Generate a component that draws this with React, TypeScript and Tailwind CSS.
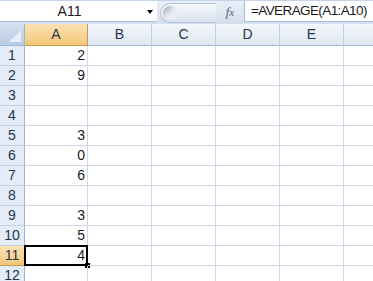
import React from 'react';

const cols = ['A', 'B', 'C', 'D', 'E', 'F'];
const values: Record<number, string> = { 1: '2', 2: '9', 5: '3', 6: '0', 7: '6', 9: '3', 10: '5', 11: '4' };
const rows = Array.from({ length: 12 }, (_, i) => i + 1);

export default function App() {
  return (
    <div
      className="w-[373px] h-[281px] overflow-hidden bg-white text-[#1a1a1a]"
      style={{ fontFamily: '"Liberation Sans", Arial, sans-serif' }}
    >
      {/* formula bar */}
      <div className="flex h-[24px] border-t border-[#c5d3e6] bg-gradient-to-b from-[#e9eff8] to-[#d3deed]">
        <div className="relative flex w-[157px] h-[21px] items-center justify-center bg-white border-b border-[#a9bcd6]">
          <span className="text-[14px] pr-[18px]">A11</span>
          <div className="absolute right-[4px] top-[9px] w-0 h-0 border-l-[3.5px] border-r-[3.5px] border-t-[4px] border-l-transparent border-r-transparent border-t-black" />
        </div>
        <div className="flex flex-1 items-center">
          <div className="ml-[3px] flex h-[20px] w-[56px] items-center rounded-l-full border border-r-0 border-[#b4c3d7] bg-gradient-to-b from-[#f7f9fc] to-[#d9e2ef]">
            <div className="ml-[2px] h-[14px] w-[14px] rounded-full bg-gradient-to-br from-[#9aa4b0] via-[#e4e8ee] to-[#f5f7fa]" />
          </div>
          <div className="flex w-[28px] h-[21px] items-center justify-center self-start">
            <span
              className="text-[13px] italic text-[#5b6170]"
              style={{ fontFamily: '"Liberation Serif", "Times New Roman", serif' }}
            >
              f<span className="text-[11px]">x</span>
            </span>
          </div>
          <div className="self-start flex h-[21px] flex-1 items-center border-l border-b border-[#a9bcd6] bg-white pl-[6px]">
            <span className="text-[13.5px] tracking-[-0.6px] whitespace-nowrap">=AVERAGE(A1:A10)</span>
          </div>
        </div>
      </div>

      {/* grid */}
      <div className="grid grid-cols-[25px_63px_64px_64px_64px_64px_64px] grid-rows-[22px_repeat(12,20px)]">
        <div className="relative border-r border-b border-[#9eb6ce] bg-gradient-to-b from-[#d3dfef] to-[#b9cce5]">
          <svg className="absolute right-[3px] bottom-[3px]" width="12" height="12" viewBox="0 0 12 12">
            <polygon points="12,0 12,12 0,12" fill="#e9eff8" />
          </svg>
        </div>
        {cols.map((c) => (
          <div
            key={c}
            className={
              c === 'A'
                ? 'flex items-center justify-center border-r border-b border-[#c29b53] bg-gradient-to-b from-[#fbe2b4] to-[#f3c677] text-[14px] text-[#27364a]'
                : 'flex items-center justify-center border-r border-b border-r-[#c0cfe2] border-b-[#9eb6ce] bg-gradient-to-b from-[#f4f7fc] to-[#dfe7f2] text-[14px] text-[#27364a]'
            }
          >
            {c === 'F' ? '' : c}
          </div>
        ))}
        {rows.map((r) => (
          <React.Fragment key={r}>
            <div
              className={
                r === 11
                  ? 'flex items-center justify-center border-r border-b border-[#c29b53] bg-gradient-to-b from-[#fbe2b4] to-[#f3c677] text-[14px] text-[#27364a]'
                  : 'flex items-center justify-center border-r border-b border-r-[#9eb6ce] border-b-[#c5d1e0] bg-[#e4ecf7] text-[14px] text-[#27364a]'
              }
            >
              {r}
            </div>
            {cols.map((c) => (
              <div
                key={c}
                className="relative flex items-center justify-end border-r border-b border-[#d0d7e5] pr-[2px] text-[14px]"
              >
                {c === 'A' ? values[r] ?? '' : ''}
                {c === 'A' && r === 11 && (
                  <>
                    <div className="absolute left-[-1px] top-[-1px] right-[-1px] bottom-[-1px] border-2 border-black" />
                    <div className="absolute right-[-3px] bottom-[-3px] w-[5px] h-[5px] bg-black" />
                  </>
                )}
              </div>
            ))}
          </React.Fragment>
        ))}
      </div>
    </div>
  );
}
